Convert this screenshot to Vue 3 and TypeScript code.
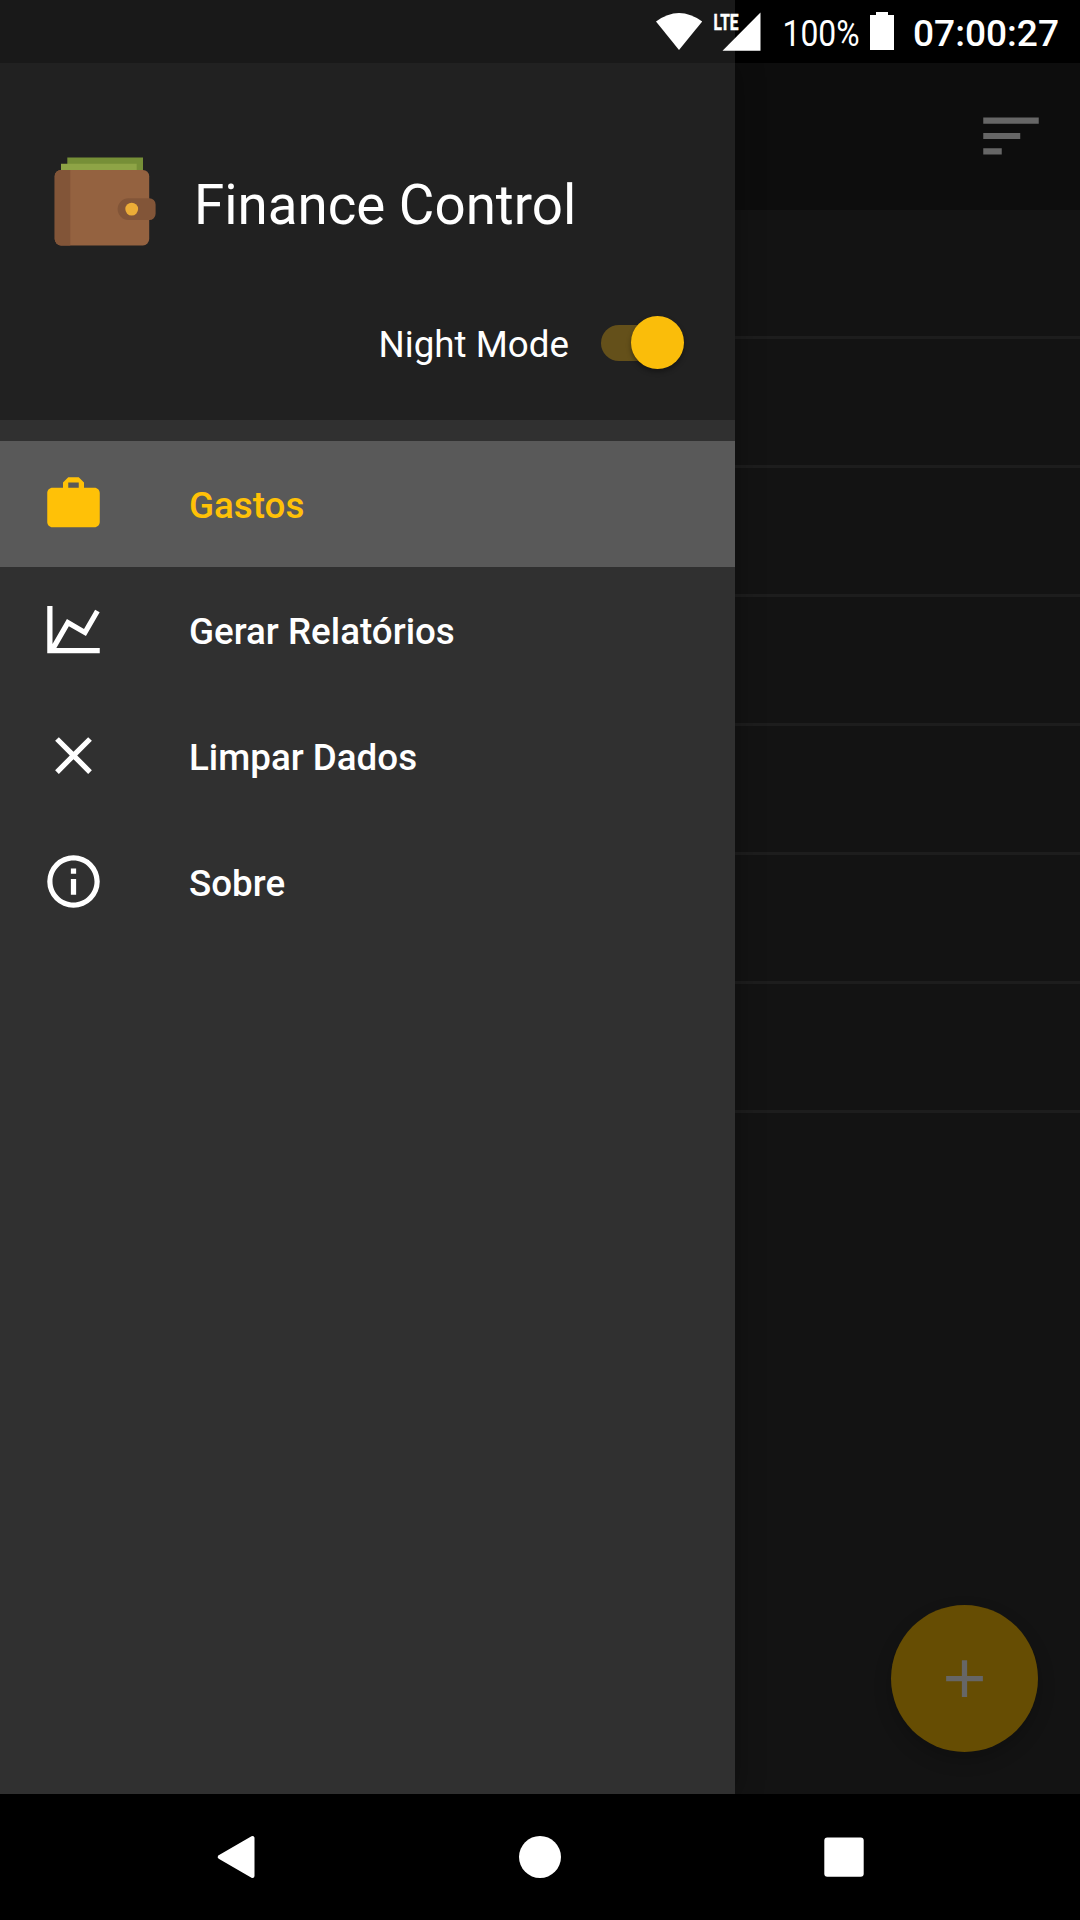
<script setup lang="ts">
import { ref } from 'vue'

interface MenuItem {
  label: string
  path: string
}

const items: MenuItem[] = [
  {
    label: 'Gastos',
    path: 'M10,2L8,4V6H4C2.89,6 2,6.89 2,8V19C2,20.1 2.89,21 4,21H20C21.1,21 22,20.1 22,19V8C22,6.89 21.1,6 20,6H16V4L14,2H10M10,4H14V6H10V4Z',
  },
  {
    label: 'Gerar Relatórios',
    path: 'M16,11.78L20.24,4.45L21.97,5.45L16.74,14.5L10.23,10.75L5.46,19H22V21H2V3H4V17.54L9.5,8L16,11.78Z',
  },
  {
    label: 'Limpar Dados',
    path: 'M19,6.41L17.59,5L12,10.59L6.41,5L5,6.41L10.59,12L5,17.59L6.41,19L12,13.41L17.59,19L19,17.59L13.41,12L19,6.41Z',
  },
  {
    label: 'Sobre',
    path: 'M11,9H13V7H11M12,20C7.59,20 4,16.41 4,12C4,7.59 7.59,4 12,4C16.41,4 20,7.59 20,12C20,16.41 16.41,20 12,20M12,2A10,10 0 0,0 2,12A10,10 0 0,0 12,22A10,10 0 0,0 22,12A10,10 0 0,0 12,2M11,17H13V11H11V17Z',
  },
]

const selected = ref(0)
const rowCount = 7
</script>

<template>
  <div class="phone">
    <header class="status">
      <svg width="440" height="63" viewBox="640 0 440 63" fill="#fff">
        <path d="M656 21.5Q679 4.500 702.200 21.500L679 50Z" />
        <text x="713.500" y="30" class="lte" textLength="25" lengthAdjust="spacingAndGlyphs">LTE</text>
        <path d="M760.500 12.500V50.700H722.500Z" />
        <text x="782.500" y="46" class="pct" textLength="77" lengthAdjust="spacingAndGlyphs">100%</text>
        <path d="M876 12H888V15H894V50H870V15H876Z" />
        <text x="913" y="46" class="clock" textLength="146" lengthAdjust="spacingAndGlyphs">07:00:27</text>
      </svg>
    </header>

    <main class="main">
      <aside class="drawer">
        <div class="head">
          <div class="brand">
            <svg class="wallet" width="102" height="90" viewBox="54 157.300 102 90">
              <path fill="#768f37" d="M67.300 157.700H143V175H67.300Z" />
              <path fill="#8ea446" d="M61 164H136.700V175H61Z" />
              <rect x="54.700" y="170.300" width="94.500" height="75.400" rx="6.300" fill="#946240" />
              <path fill="#825538" d="M61 170.300H70.300V245.700H61A6.300 6.300 0 0 1 54.700 239.400V176.600A6.300 6.300 0 0 1 61 170.300Z" />
              <path fill="#825538" d="M128.500 198.500H149.300A6.300 6.300 0 0 1 155.600 204.800V214A6.300 6.300 0 0 1 149.300 220.300H128.500A10.900 10.900 0 0 1 128.500 198.500Z" />
              <circle cx="131.700" cy="209.400" r="6.400" fill="#ecad37" />
            </svg>
            <h1 class="title">Finance Control</h1>
          </div>
          <div class="night">
            <span class="night-label">Night Mode</span>
            <span class="switch"><span class="thumb"></span></span>
          </div>
        </div>
        <nav class="menu">
          <a
            v-for="(item, i) in items"
            :key="item.label"
            class="item"
            :class="{ active: i === selected }"
            @click="selected = i"
          >
            <svg width="63" height="63" viewBox="0 0 24 24" fill="currentColor"><path :d="item.path" /></svg>
            <span>{{ item.label }}</span>
          </a>
        </nav>
      </aside>

      <section class="content">
        <div class="appbar">
          <svg width="74" height="74" viewBox="0 0 24 24" fill="#666">
            <path d="M3 18h6v-2H3v2zM3 6v2h18V6H3zm0 7h12v-2H3v2z" />
          </svg>
        </div>
        <div v-for="n in rowCount" :key="n" class="row"></div>
        <button class="fab" type="button" aria-label="+">
          <svg width="63" height="63" viewBox="0 0 24 24" fill="#666">
            <path d="M19 13h-6v6h-2v-6H5v-2h6V5h2v6h6v2z" />
          </svg>
        </button>
      </section>
    </main>

    <footer class="navbar">
      <svg width="48" height="48" viewBox="0 0 48 48">
        <path d="M7.700 24L40.500 5V43Z" fill="#fff" class="back" />
      </svg>
      <svg width="48" height="48" viewBox="0 0 48 48"><circle cx="24" cy="24" r="21" fill="#fff" /></svg>
      <svg width="48" height="48" viewBox="0 0 48 48">
        <rect x="4.300" y="4.400" width="39.400" height="39.400" rx="3" fill="#fff" />
      </svg>
    </footer>
  </div>
</template>

<style>
body {
  margin: 0;
  background: #000;
}
</style>

<style scoped>
.phone {
  width: 1080px;
  height: 1920px;
  display: flex;
  flex-direction: column;
  overflow: hidden;
  background: #000;
  color: #fff;
  font-family: Roboto, sans-serif;
}
.status {
  height: 63px;
  flex: none;
  display: flex;
  justify-content: flex-end;
  background: linear-gradient(to right, #191919 735px, #000 735px);
}
.lte {
  font-size: 22.5px;
  font-weight: 700;
  stroke: #fff;
  stroke-width: 0.5px;
}
.pct {
  font-size: 36.75px;
  font-weight: 400;
}
.clock {
  font-size: 36.75px;
  font-weight: 500;
}
.main {
  height: 1731px;
  flex: none;
  display: flex;
  overflow: hidden;
}
.drawer {
  width: 735px;
  flex: none;
  background: #303030;
  box-shadow: 0 0 28px rgba(0, 0, 0, 0.3);
  z-index: 1;
}
.head {
  height: 357px;
  box-sizing: border-box;
  padding: 94px 50px 0 54px;
  background: #212121;
}
.brand {
  display: flex;
  align-items: flex-start;
  height: 90px;
}
.title {
  margin: 10px 0 0 38px;
  font-size: 54.7px;
  line-height: 76px;
  font-weight: 400;
  white-space: nowrap;
}
.night {
  display: flex;
  justify-content: flex-end;
  align-items: center;
  margin-top: 62px;
  height: 67px;
}
.night-label {
  font-size: 36.75px;
  line-height: 44px;
  margin-top: 5px;
}
.switch {
  display: flex;
  justify-content: flex-end;
  align-items: center;
  width: 80px;
  height: 36px;
  margin-left: 32px;
  margin-right: 4px;
  border-radius: 18px;
  background: #64501a;
}
.thumb {
  flex: none;
  width: 53px;
  height: 53px;
  margin-right: -3px;
  margin-top: -1px;
  border-radius: 50%;
  background: #fabd0a;
  box-shadow: 0 3px 5px rgba(0, 0, 0, 0.35);
}
.menu {
  padding-top: 21px;
}
.item {
  display: flex;
  align-items: center;
  height: 126px;
  padding-left: 42px;
  gap: 84px;
  font-size: 36.75px;
  line-height: 44px;
  font-weight: 500;
  color: #fff;
}
.item svg {
  margin-bottom: 1px;
}
.item span {
  padding-top: 4px;
}
.item.active {
  background: #595959;
  color: #ffc107;
}
.content {
  position: relative;
  flex: 1;
  background: #131313;
}
.appbar {
  height: 147px;
  box-sizing: border-box;
  padding: 36px 32px 0 0;
  display: flex;
  justify-content: flex-end;
  background: #0d0d0d;
}
.row {
  height: 126px;
  border-bottom: 3px solid #1d1d1d;
}
.fab {
  position: absolute;
  right: 42px;
  bottom: 42px;
  width: 147px;
  height: 147px;
  display: flex;
  align-items: center;
  justify-content: center;
  padding: 0;
  border: 0;
  border-radius: 50%;
  background: #664d03;
  box-shadow: 0 8px 18px rgba(0, 0, 0, 0.2);
}
.navbar {
  height: 126px;
  flex: none;
  display: flex;
  justify-content: space-between;
  align-items: center;
  padding: 0 212px;
  background: #000;
}
.back {
  stroke: #fff;
  stroke-width: 4px;
  stroke-linejoin: round;
}
</style>
